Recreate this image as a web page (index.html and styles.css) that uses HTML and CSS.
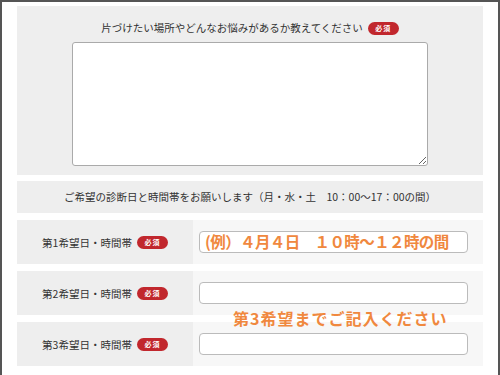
FILE: index.html
```html
<!DOCTYPE html>
<html lang="ja">
<head>
  <meta charset="UTF-8" />
  <title>お問い合わせフォーム</title>
  <link rel="stylesheet" href="styles.css">
</head>
<body>
  <div class="frame">
    <!-- お悩み -->
    <div class="panel panel-worry">
      <p class="panel-label">片づけたい場所やどんなお悩みがあるか教えてください <span class="badge">必須</span></p>
      <textarea class="worry-text"></textarea>
    </div>

    <div class="panel panel-note">
      <p>ご希望の診断日と時間帯をお願いします（月・水・土　10：00〜17：00の間）</p>
    </div>

    <!-- 希望日 -->
    <div class="dates">
      <div class="date-row">
        <div class="date-head">第1希望日・時間帯 <span class="badge">必須</span></div>
        <div class="date-body"><input type="text" class="date-input" placeholder="(例）４月４日　１０時〜１２時の間"></div>
      </div>
      <div class="date-row">
        <div class="date-head">第2希望日・時間帯 <span class="badge">必須</span></div>
        <div class="date-body"><input type="text" class="date-input"></div>
      </div>
      <div class="date-row">
        <div class="date-head">第3希望日・時間帯 <span class="badge">必須</span></div>
        <div class="date-body"><input type="text" class="date-input"></div>
      </div>
      <p class="date-hint">第3希望までご記入ください</p>
    </div>
  </div>
</body>
</html>
```

FILE: styles.css
```css
body {
  margin: 0;
  background-color: #fff;
  font-family: "Noto Sans CJK JP", "Noto Sans", sans-serif;
  color: #333;
}
.frame {
  border: 2px solid #555;
  border-bottom: none;
  padding: 4px 15px 0;
  min-height: 100vh;
  box-sizing: border-box;
}
.panel {
  background-color: #eee;
  text-align: center;
}
.panel p {
  margin: 0;
}
.panel-worry {
  padding: 14px 0 9px;
}
.panel-label {
  font-size: 10.5px;
  line-height: 16px;
  margin-bottom: 6px !important;
  display: flex;
  justify-content: center;
  align-items: center;
  gap: 5px;
}
.worry-text {
  display: block;
  margin: 0 auto;
  width: 356px;
  height: 124px;
  box-sizing: border-box;
  border: 1px solid #aaa;
  border-radius: 3px;
  background-color: #fff;
  resize: vertical;
}
.panel-note {
  margin-top: 6px;
  height: 32px;
  line-height: 32px;
  font-size: 10.5px;
}
.badge {
  display: inline-block;
  width: 31px;
  height: 13px;
  line-height: 13px;
  border-radius: 7px;
  background-color: #c1272d;
  color: #fff;
  font-size: 7px;
  font-weight: bold;
  letter-spacing: 1px;
  text-align: center;
}
.dates {
  position: relative;
  margin-top: 7px;
  display: flex;
  flex-direction: column;
  gap: 7px;
}
.date-row {
  display: flex;
  height: 44px;
}
.date-head {
  width: 176px;
  background-color: #eee;
  display: flex;
  justify-content: center;
  align-items: center;
  gap: 5px;
  font-size: 10.5px;
}
.date-body {
  flex: 1;
  background-color: #f7f7f7;
  display: flex;
  align-items: center;
  padding-left: 6px;
}
.date-input {
  width: 269px;
  height: 22px;
  box-sizing: border-box;
  border: 1px solid #bbb;
  border-radius: 4px;
  background-color: #fff;
  padding: 0 5px;
  font-family: inherit;
}
.date-input::placeholder {
  color: #f0883e;
  font-weight: bold;
  font-size: 15.5px;
  letter-spacing: -0.6px;
}
.date-hint {
  position: absolute;
  left: 216px;
  top: 86px;
  margin: 0;
  color: #f0883e;
  font-size: 16px;
  font-weight: bold;
  letter-spacing: 1px;
}
```
